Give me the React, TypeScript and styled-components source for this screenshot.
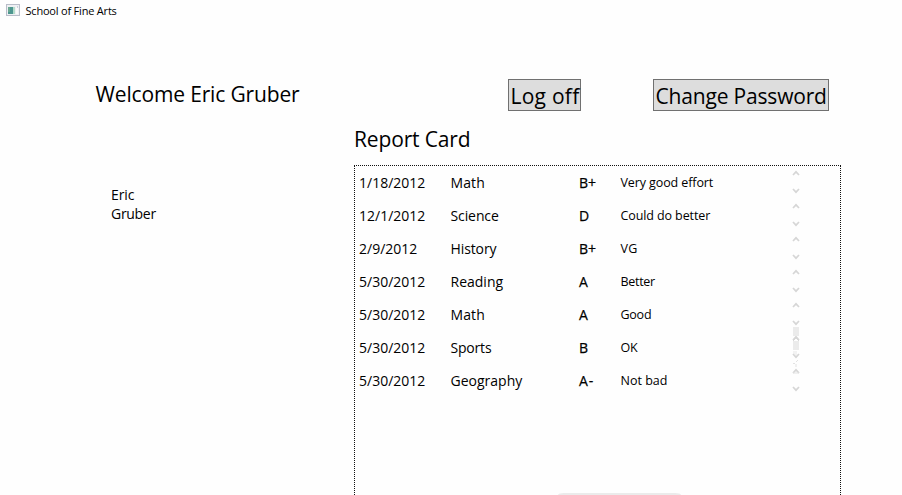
import React from "react";
import styled, { createGlobalStyle } from "styled-components";

const GlobalStyle = createGlobalStyle`
  * { box-sizing: border-box; }
  body {
    margin: 0;
    overflow: hidden;
    background: #fff;
    color: #000;
    font-family: "Open Sans", "Noto Sans", sans-serif;
  }
`;

const Window = styled.div`
  width: 902px;
  height: 495px;
  overflow: hidden;
  display: flex;
  flex-direction: column;
  background: #fefefe;
`;

const TitleBar = styled.header`
  flex: none;
  height: 20px;
  padding-left: 6px;
  display: flex;
  align-items: center;
  gap: 5.5px;
  font-size: 11px;
  letter-spacing: -0.2px;
`;

const Header = styled.div`
  flex: none;
  margin-top: 59px;
  height: 32px;
  display: grid;
  grid-template-columns: 413px 145px 176px;
  padding-left: 95px;
`;

const Text = styled.span<{ $track?: number }>`
  letter-spacing: ${(p) => p.$track ?? 0}px;
  white-space: nowrap;
`;

const Welcome = styled.div`
  padding-left: 0.5px;
  font-size: 21px;
  line-height: 30px;
`;

const Button = styled.button<{ $width: number }>`
  width: ${(p) => p.$width}px;
  height: 32px;
  padding: 1px 0 0 1.5px;
  border: 1px solid #707070;
  background: #ddd;
  color: #000;
  font: 21px/30px "Open Sans", sans-serif;
  text-align: left;
`;

const Content = styled.main`
  flex: 1;
  min-height: 0;
  display: grid;
  grid-template-columns: 354px 487px;
`;

const Student = styled.div`
  padding: 74px 0 0 111px;
  display: flex;
  flex-direction: column;
  font-size: 14px;
  line-height: 19px;
`;

const Report = styled.section`
  display: flex;
  flex-direction: column;
  min-height: 0;
`;

const Heading = styled.h2`
  flex: none;
  margin: 0;
  height: 54px;
  padding-top: 14px;
  font-size: 21px;
  font-weight: 400;
  line-height: 29px;
`;

const List = styled.div`
  position: relative;
  flex: 1;
  border: 1px dotted #111;
  border-bottom: 0;
`;

const Row = styled.div`
  height: 33px;
  padding-left: 4px;
  display: grid;
  grid-template-columns: 91.5px 128.5px 41.5px 171.5px 10px;
  align-items: center;
  font-size: 14px;
`;

const Grade = styled.span<{ $track?: number }>`
  letter-spacing: ${(p) => p.$track ?? 0}px;
  -webkit-text-stroke: 0.25px #000;
`;

const Comment = styled(Text)`
  font-size: 12.5px;
`;

const Overlap = styled.svg`
  position: absolute;
  left: 437px;
  top: 160px;
`;

const BottomTab = styled.div`
  position: absolute;
  left: 203px;
  bottom: 0;
  width: 123px;
  height: 2px;
  border-radius: 6px 6px 0 0 / 2px 2px 0 0;
  background: #ebebeb;
`;

type Entry = { date: string; subject: string; st?: number; grade: string; gt?: number; comment: string; ct?: number };

const entries: Entry[] = [
  { date: "1/18/2012", subject: "Math", st: 0.1, grade: "B+", comment: "Very good effort", ct: -0.1 },
  { date: "12/1/2012", subject: "Science", st: -0.1, grade: "D", comment: "Could do better", ct: -0.1 },
  { date: "2/9/2012", subject: "History", st: -0.1, grade: "B+", comment: "VG", ct: 0.4 },
  { date: "5/30/2012", subject: "Reading", grade: "A", comment: "Better", ct: -0.3 },
  { date: "5/30/2012", subject: "Math", st: 0.1, grade: "A", comment: "Good", ct: -0.25 },
  { date: "5/30/2012", subject: "Sports", st: -0.2, grade: "B", comment: "OK", ct: -0.2 },
  { date: "5/30/2012", subject: "Geography", grade: "A-", gt: 1, comment: "Not bad" },
];

const AppIcon = () => (
  <svg width="14" height="12" viewBox="0 0 14 12">
    <rect x="0.5" y="0.5" width="13" height="11" fill="#eef0f3" stroke="#b9bdc9" />
    <rect x="2" y="3" width="5" height="7" fill="#4d9690" />
    <rect x="2" y="3" width="2" height="5" fill="#6aa892" />
    <rect x="7" y="3" width="2" height="7" fill="#b5dccb" />
    <rect x="10" y="3" width="2" height="7" fill="#fafafa" />
    <rect x="11" y="2" width="1" height="2" fill="#cbd2dc" />
  </svg>
);

const ScrollArrows = () => (
  <svg width="8" height="33" viewBox="0 0 8 33" fill="none" stroke="#d6d6d6" strokeWidth="1.7">
    <path d="M1 9 L4 5.8 L7 9" />
    <path d="M1 23 L4 26.2 L7 23" />
  </svg>
);

export default function App() {
  return (
    <>
      <GlobalStyle />
      <Window>
        <TitleBar>
          <AppIcon />
          <span>School of Fine Arts</span>
        </TitleBar>
        <Header>
          <Welcome><Text $track={-0.15}>Welcome Eric Gruber</Text></Welcome>
          <Button $width={73}><Text $track={0.25}>Log off</Text></Button>
          <Button $width={176}><Text $track={-0.18}>Change Password</Text></Button>
        </Header>
        <Content>
          <Student>
            <Text $track={-0.1}>Eric</Text>
            <Text $track={-0.3}>Gruber</Text>
          </Student>
          <Report>
            <Heading><Text $track={-0.15}>Report Card</Text></Heading>
            <List>
              {entries.map((e, i) => (
                <Row key={i}>
                  <Text>{e.date}</Text>
                  <Text $track={e.st}>{e.subject}</Text>
                  <Grade $track={e.gt}>{e.grade}</Grade>
                  <Comment $track={e.ct}>{e.comment}</Comment>
                  <ScrollArrows />
                </Row>
              ))}
              <Overlap width="8" height="52" viewBox="0 0 8 52" fill="none" stroke="#d8d8d8">
                <rect x="1" y="1" width="6" height="9" fill="#ebebeb" stroke="none" />
                <rect x="1" y="15" width="6" height="9" fill="#ebebeb" stroke="none" />
                <path d="M1 15 L4 12 L7 15" />
                <path d="M1 -2 H7 M2 25 V28 M4 25 V29" stroke="#e6e6e6" />
                <path d="M1 37.5 H3 M4 36 L6 34 M4 38 V41 M1 47 H7" stroke="#e2e2e2" />
              </Overlap>
              <BottomTab />
            </List>
          </Report>
        </Content>
      </Window>
    </>
  );
}
